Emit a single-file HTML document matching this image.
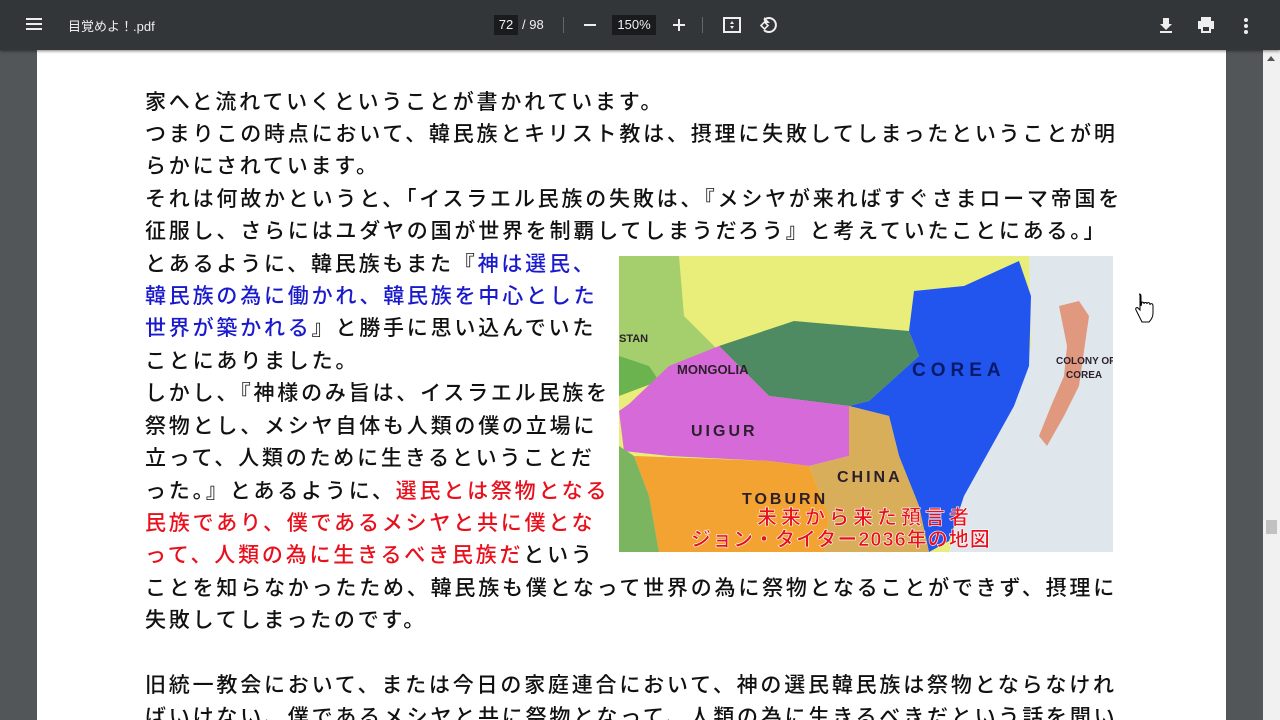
<!DOCTYPE html>
<html style="overflow:hidden"><head><meta charset="utf-8"><style>
*{margin:0;padding:0;box-sizing:border-box}
html,body{width:1280px;height:720px;overflow:hidden}
body{background:#525659;font-family:"Liberation Sans","Noto Sans CJK JP",sans-serif;position:relative}
#tb{position:absolute;left:0;top:0;width:1280px;height:50px;background:#323639;box-shadow:0 1px 3px rgba(0,0,0,.5);z-index:2;color:#f1f1f1}
#page{position:absolute;left:37px;top:50px;width:1189px;height:670px;background:#fff}
#sb{position:absolute;left:1263px;top:50px;width:17px;height:670px;background:#f1f1f1}
.l{position:absolute;left:145px;font-size:21px;letter-spacing:2.8px;white-space:nowrap;color:#111;line-height:26px;font-weight:500}
.b{color:#1a1acc}.r{color:#e8101c}
</style></head><body>
<div id="tb">
 <div style="position:absolute;left:26px;top:18px;width:16px;height:2px;background:#eee;box-shadow:0 5px 0 #eee,0 10px 0 #eee"></div>
 <div style="position:absolute;left:68px;top:16px;font-size:13px;color:#eee">目覚めよ！.pdf</div>
 <div style="position:absolute;left:494px;top:15px;width:24px;height:20px;background:#191b1c;font-size:13px;text-align:center;line-height:20px">72</div>
 <div style="position:absolute;left:522px;top:17px;font-size:13px">/ 98</div>
 <div style="position:absolute;left:563px;top:17px;width:1px;height:16px;background:#666"></div>
 <div style="position:absolute;left:584px;top:24px;width:12px;height:2px;background:#eee"></div>
 <div style="position:absolute;left:612px;top:15px;width:44px;height:20px;background:#191b1c;font-size:13px;text-align:center;line-height:20px">150%</div>
 <div style="position:absolute;left:673px;top:24px;width:12px;height:2px;background:#eee"></div>
 <div style="position:absolute;left:678px;top:19px;width:2px;height:12px;background:#eee"></div>
 <div style="position:absolute;left:702px;top:17px;width:1px;height:16px;background:#666"></div>
 <svg style="position:absolute;left:722px;top:15px" width="20" height="20" viewBox="0 0 20 20"><rect x="2" y="3" width="16" height="14" fill="none" stroke="#eee" stroke-width="2"/><path d="M10 6l-2 3h4zM10 14l-2-3h4z" fill="#eee"/></svg>
 <svg style="position:absolute;left:758px;top:15px" width="20" height="20" viewBox="0 0 20 20"><path d="M6 5a7 7 0 1 1 0 10" fill="none" stroke="#eee" stroke-width="2"/><path d="M6 2v6h6" fill="#eee"/><rect x="4" y="8" width="5" height="5" transform="rotate(45 6.5 10.5)" fill="none" stroke="#eee" stroke-width="1.6"/></svg>
 <svg style="position:absolute;left:1157px;top:16px" width="18" height="18" viewBox="0 0 18 18"><path d="M6 2h6v6h3l-6 6-6-6h3z M3 15h12v2H3z" fill="#eee"/></svg>
 <svg style="position:absolute;left:1196px;top:16px" width="20" height="18" viewBox="0 0 20 18"><path d="M5 1h10v4H5z M2 5h16v8h-3v4H5v-4H2z" fill="#eee"/><rect x="7" y="11" width="6" height="4" fill="#323639"/></svg>
 <div style="position:absolute;left:1244px;top:18px;width:4px;height:4px;border-radius:2px;background:#eee;box-shadow:0 6px 0 #eee,0 12px 0 #eee"></div>
</div>
<div id="page"></div>
<div id="sb"><div style="position:absolute;left:4px;top:6px;border:4px solid transparent;border-bottom:5px solid #555;border-top:0"></div><div style="position:absolute;left:3px;top:470px;width:11px;height:14px;background:#c1c1c1"></div></div>

<div class="l" style="top:90px">家へと流れていくということが書かれています。</div>
<div class="l" style="top:122px">つまりこの時点において、韓民族とキリスト教は、摂理に失敗してしまったということが明</div>
<div class="l" style="top:154px">らかにされています。</div>
<div class="l" style="top:187px">それは何故かというと、「イスラエル民族の失敗は、『メシヤが来ればすぐさまローマ帝国を</div>
<div class="l" style="top:219px">征服し、さらにはユダヤの国が世界を制覇してしまうだろう』と考えていたことにある。」</div>
<div class="l" style="top:252px">とあるように、韓民族もまた『<span class="b">神は選民、</span></div>
<div class="l b" style="top:284px">韓民族の為に働かれ、韓民族を中心とした</div>
<div class="l" style="top:316px"><span class="b">世界が築かれる</span>』と勝手に思い込んでいた</div>
<div class="l" style="top:349px">ことにありました。</div>
<div class="l" style="top:381px">しかし、『神様のみ旨は、イスラエル民族を</div>
<div class="l" style="top:414px">祭物とし、メシヤ自体も人類の僕の立場に</div>
<div class="l" style="top:446px">立って、人類のために生きるということだ</div>
<div class="l" style="top:479px">った。』とあるように、<span class="r">選民とは祭物となる</span></div>
<div class="l r" style="top:511px">民族であり、僕であるメシヤと共に僕とな</div>
<div class="l" style="top:543px"><span class="r">って、人類の為に生きるべき民族だ</span>という</div>
<div class="l" style="top:576px">ことを知らなかったため、韓民族も僕となって世界の為に祭物となることができず、摂理に</div>
<div class="l" style="top:608px">失敗してしまったのです。</div>
<div class="l" style="top:673px">旧統一教会において、または今日の家庭連合において、神の選民韓民族は祭物とならなけれ</div>
<div class="l" style="top:705px">ばいけない、僕であるメシヤと共に祭物となって、人類の為に生きるべきだという話を聞い</div>

<svg style="position:absolute;left:619px;top:256px" width="494" height="296" viewBox="0 0 494 296">
<rect width="494" height="296" fill="#e9ee7a"/>
<path d="M410 0H494V296H330L340 250L360 210L395 150L412 90Z" fill="#dfe7ec"/>
<path d="M0 0H60L65 60L100 95L100 130L30 125L0 130Z" fill="#a4cf6c"/>
<path d="M0 100L30 110L40 125L0 140Z" fill="#6bb34f"/>
<path d="M100 90L175 65L290 75L300 100L250 145L230 150L150 140Z" fill="#4e8a62"/>
<path d="M290 75L295 35L345 30L400 5L412 40L410 110L395 150L370 195L345 240L330 285L310 296L300 250L280 200L270 160L230 150L250 145L300 100Z" fill="#2255ee"/>
<path d="M440 50L460 45L470 60L465 95L460 130L445 160L428 190L420 180L432 150L445 120L448 90Z" fill="#e0987f"/>
<path d="M0 155L10 148L50 110L100 90L150 140L230 150L230 200L190 210L150 205L50 200L5 195Z" fill="#d66ad9"/>
<path d="M15 200L150 205L190 210L210 260L205 296H40L30 240Z" fill="#f2a332"/>
<path d="M190 210L230 200L230 150L270 160L280 200L300 250L310 296H205L210 260Z" fill="#d9ae5a"/>
<path d="M0 190L15 200L30 240L40 296H0Z" fill="#7bb55f"/>
<g font-family="Liberation Sans" font-weight="bold" fill="#2a1f2a">
<text x="58" y="118" font-size="13">MONGOLIA</text>
<text x="72" y="180" font-size="16" letter-spacing="3">UIGUR</text>
<text x="218" y="226" font-size="16" letter-spacing="3">CHINA</text>
<text x="123" y="248" font-size="16" letter-spacing="3">TOBURN</text>
<text x="293" y="120" font-size="19" letter-spacing="5" fill="#0a1a6a">COREA</text>
<text x="437" y="108" font-size="10">COLONY OF</text>
<text x="447" y="122" font-size="10">COREA</text>
<text x="0" y="86" font-size="11">STAN</text>
</g>
<g font-family="Liberation Sans,Noto Sans CJK JP,sans-serif" font-weight="bold" fill="#e8101c" stroke="#fff" stroke-width=".6">
<text x="138" y="268" font-size="20" letter-spacing="4">未来から来た預言者</text>
<text x="72" y="290" font-size="20" letter-spacing="1">ジョン・タイター2036年の地図</text>
</g>
</svg>
<svg style="position:absolute;left:1132px;top:292px" width="28" height="32" viewBox="0 0 28 32"><path d="M7 2c1.5 0 2 1 2 2v10l1-4c2 0 2 1 2 2 0-2 3-2 3 0 0-2 3-2 3 1 0-2 3-2 3 1v7c0 4-2 7-4 9H10L4 18c-1-2 1-3 2-2l2 2V4c0-1 0-2-1-2z" fill="#fff" stroke="#000" stroke-width="1"/></svg>
</body></html>
